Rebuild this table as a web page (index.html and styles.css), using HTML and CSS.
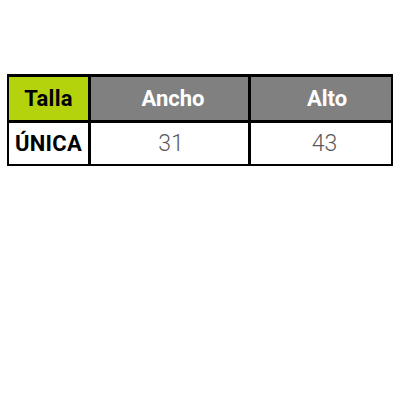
FILE: index.html
```html
<!DOCTYPE html>
<html lang="es">
<head>
<meta charset="utf-8">
<link rel="stylesheet" href="styles.css">
</head>
<body>
<div class="page">
  <div class="sizes">
    <div class="cell head head-size">Talla</div>
    <div class="cell head head-width">Ancho</div>
    <div class="cell head head-height">Alto</div>
    <div class="cell size">ÚNICA</div>
    <div class="cell value value-width">31</div>
    <div class="cell value value-height">43</div>
  </div>
</div>
</body>
</html>
```
FILE: styles.css
```css
html, body {
  margin: 0;
  padding: 0;
  background: #ffffff;
}
.page {
  padding: 74px 0 0 7px;
  font-family: Roboto, "Liberation Sans", sans-serif;
}
.sizes {
  display: grid;
  width: 386px;
  box-sizing: border-box;
  grid-template-columns: 79px 157px 140px;
  grid-template-rows: 43px 41px;
  gap: 3px;
  padding: 3px 2px 2px 2px;
  background: #000000;
}
.cell {
  display: flex;
  align-items: center;
  justify-content: center;
  background: #ffffff;
}
.head {
  background: #808080;
  color: #ffffff;
  font-weight: 700;
  font-size: 22px;
}
.head-width {
  padding-left: 7px;
}
.head-height {
  padding-left: 12px;
}
.head-size {
  background: #b5d30c;
  color: #000000;
  letter-spacing: 0.3px;
}
.size {
  color: #000000;
  font-weight: 700;
  font-size: 22px;
  letter-spacing: 0.3px;
}
.value {
  color: #5a5a5a;
  font-weight: 300;
  font-size: 23px;
}
.value-width {
  padding-left: 3px;
}
.value-height {
  padding-left: 7px;
}
```
